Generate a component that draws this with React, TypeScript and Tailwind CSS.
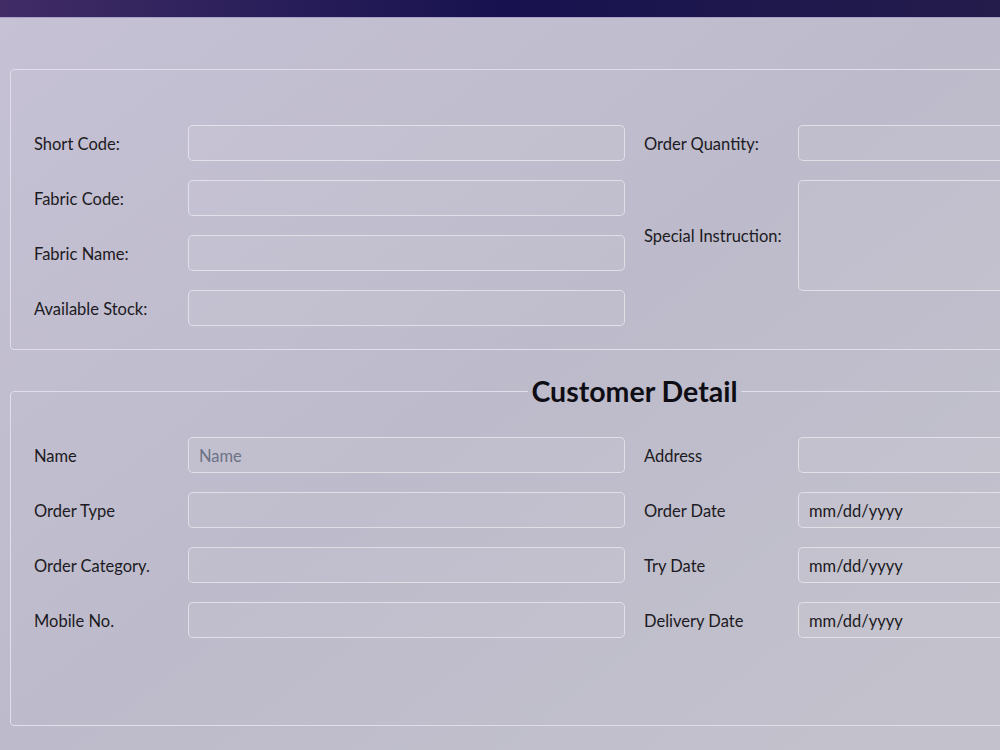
import React from "react";

const font = { fontFamily: "'Segoe UI', Lato, 'Noto Sans', sans-serif" };

function Row({ label, children }: { label: string; children: React.ReactNode }) {
  return (
    <div className="flex items-center">
      <label className="w-[154px] shrink-0 pt-[2px] text-[16.5px] text-[#1c1a22]">{label}</label>
      {children}
    </div>
  );
}

const inputCls =
  "w-[437px] h-[36px] rounded-[5px] border border-white/50 bg-white/5 px-[10px] pt-[2px] text-[16.5px] text-[#1c1a22] outline-none placeholder:text-[#6b7285]";

function Input({ placeholder }: { placeholder?: string }) {
  return <input className={inputCls} placeholder={placeholder} />;
}

function DateInput() {
  return (
    <div className={inputCls + " flex items-center"}>
      <span>mm/dd/yyyy</span>
    </div>
  );
}

export default function App() {
  return (
    <div
      className="w-[1000px] h-[750px] overflow-hidden bg-gradient-to-br from-[#c6c1d5] via-[#bdbbcb] to-[#c3c2cc]"
      style={font}
    >
      <div className="h-[18px] border-b border-[#a8a2c6] bg-gradient-to-r from-[#412c66] via-[#17124f] to-[#241c4b]" />
      <div className="w-[1259px] pl-[10px] pt-[51px]">
        <fieldset className="h-[281px] rounded-[4px] border border-[#e1dee9] px-[23px] pt-[55px]">
          <div className="flex gap-[19px]">
            <div className="flex flex-col gap-[19px]">
              <Row label="Short Code:"><Input /></Row>
              <Row label="Fabric Code:"><Input /></Row>
              <Row label="Fabric Name:"><Input /></Row>
              <Row label="Available Stock:"><Input /></Row>
            </div>
            <div className="flex flex-col gap-[19px]">
              <Row label="Order Quantity:"><Input /></Row>
              <Row label="Special Instruction:">
                <textarea className={inputCls + " h-[111px] resize-none"} />
              </Row>
            </div>
          </div>
        </fieldset>
        <fieldset className="mt-[24px] h-[352px] rounded-[4px] border border-[#e1dee9] px-[23px] pt-[29px]">
          <legend className="mx-auto px-[3px] text-[28.5px] font-bold leading-[34px] text-[#0e0d14]">
            Customer Detail
          </legend>
          <div className="flex gap-[19px]">
            <div className="flex flex-col gap-[19px]">
              <Row label="Name"><Input placeholder="Name" /></Row>
              <Row label="Order Type"><Input /></Row>
              <Row label="Order Category."><Input /></Row>
              <Row label="Mobile No."><Input /></Row>
            </div>
            <div className="flex flex-col gap-[19px]">
              <Row label="Address"><Input /></Row>
              <Row label="Order Date"><DateInput /></Row>
              <Row label="Try Date"><DateInput /></Row>
              <Row label="Delivery Date"><DateInput /></Row>
            </div>
          </div>
        </fieldset>
      </div>
    </div>
  );
}
